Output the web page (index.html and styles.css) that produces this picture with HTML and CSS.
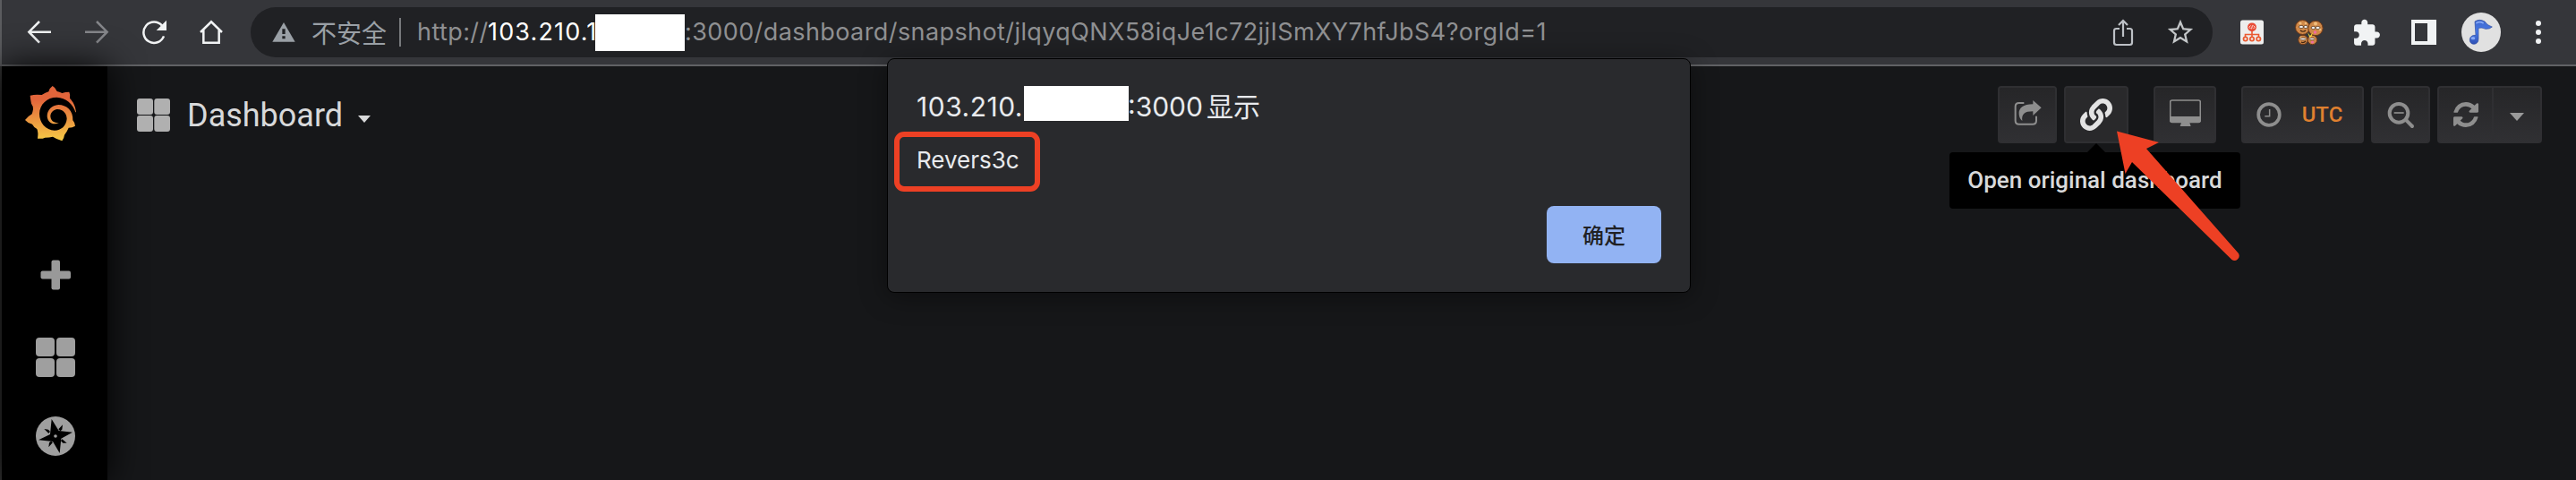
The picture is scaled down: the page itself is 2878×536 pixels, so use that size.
FILE: index.html
```html
<!DOCTYPE html>
<html lang="zh-CN">
<head>
<meta charset="utf-8">
<title>Dashboard</title>
<link rel="stylesheet" href="styles.css">
</head>
<body>
<header class="browser-bar">
  <nav class="nav-buttons">
    <span class="slot"><svg width="28" height="28" viewBox="90 65 84 84" class="line light"><path d="M171 106H97M132 71L97 106L132 142"/></svg></span>
    <span class="slot"><svg width="28" height="28" viewBox="282 65 84 84" class="line dim"><path d="M285 106H359M324 71L359 106L324 142"/></svg></span>
    <span class="slot"><svg width="28" height="28" viewBox="474 66 84 84"><path class="line light" d="M549 121A35 35 0 1 1 543 86"/><path fill="#f1f3f4" d="M558 68V102H524Z"/></svg></span>
    <span class="slot"><svg width="28" height="28" viewBox="666 66 84 84" class="line light"><path d="M672 108L708 73L744 108M682 100V143H734V100"/></svg></span>
  </nav>
  <div class="address">
    <svg class="warning" width="26" height="24" viewBox="911 73 78 72"><path fill="#9aa0a6" d="M950 76L988 141H912Z"/><path fill="#202124" d="M945 98H955V115H945ZM945 122H955V131H945Z"/></svg>
    <span class="insecure">不安全</span>
    <span class="divider"></span>
    <span class="url"><span class="scheme">http://</span><span class="host">103.210.1</span><span class="url-mask"></span><span class="path">:3000/dashboard/snapshot/jlqyqQNX58iqJe1c72jjISmXY7hfJbS4?orgId=1</span></span>
    <span class="slot"><svg width="24" height="32" viewBox="0 0 24 32" fill="none" stroke="#bdc1c6" stroke-width="2.2"><path d="M8 12H4.500Q2 12 2 14.500V27.500Q2 30 4.500 30H19.500Q22 30 22 27.500V14.500Q22 12 19.500 12H16M12 21V3.500M7 8L12 3L17 8"/></svg></span>
    <span class="slot"><svg width="34" height="34" viewBox="0 0 24 24"><path fill="#c4c7c9" d="M22 9.240l-7.190-.62L12 2 9.190 8.630 2 9.240l5.460 4.730L5.820 21 12 17.270 18.180 21l-1.630-7.030L22 9.240zM12 15.400l-3.760 2.270 1-4.280-3.320-2.880 4.380-.38L12 6.100l1.710 4.040 4.380.38-3.320 2.880 1 4.280L12 15.400z"/></svg></span>
  </div>
  <div class="extensions">
    <span class="slot">
      <svg width="26" height="28" viewBox="0 0 26 28"><rect width="26" height="27" y=".5" rx="2.500" fill="#eeeeed"/><path d="M13 11V19M5.500 19V16.500H20.500V19" fill="none" stroke="#ea5a31" stroke-width="1.600"/><circle cx="13" cy="8.300" r="4.900" fill="#e94b35"/><path d="M11.500 6.500L9.800 8.300L11.500 10.100M14.500 6.500L16.200 8.300L14.500 10.100M13.500 6.300L12.500 10.300" fill="none" stroke="#fff" stroke-width=".8"/><g fill="#f2eae5" stroke="#ea5a31" stroke-width="1.700"><circle cx="5.700" cy="21.500" r="2.200"/><circle cx="13" cy="21.500" r="2.200"/><circle cx="20.300" cy="21.500" r="2.200"/></g></svg>
    </span>
    <span class="slot">
      <svg width="34" height="30" viewBox="0 0 34 30"><g fill="#cf8848" stroke="#6b3718" stroke-width="1"><circle cx="9.500" cy="9.500" r="8"/><circle cx="24" cy="10.500" r="8.200"/><circle cx="10" cy="23.500" r="5.200"/><circle cx="20.500" cy="23.500" r="5.200"/></g><g fill="#f0bd7d"><circle cx="7" cy="5" r="1.600"/><circle cx="13" cy="5" r="1.300"/><circle cx="24" cy="5.500" r="2"/><circle cx="29" cy="12" r="1.400"/><circle cx="7.500" cy="20.500" r="1.100"/><circle cx="18" cy="20.500" r="1"/></g><g fill="#fff" stroke="#412411" stroke-width=".7"><ellipse cx="8" cy="9" rx="2.600" ry="1.500"/><ellipse cx="13" cy="9" rx="2.200" ry="1.500"/><ellipse cx="21.500" cy="10" rx="2.400" ry="1.500"/><ellipse cx="26.500" cy="10" rx="2.600" ry="1.500"/><ellipse cx="10" cy="22.500" rx="3.300" ry="1.300"/><ellipse cx="20" cy="22.500" rx="3" ry="1.200"/></g><path d="M7 13Q10 15.500 13 13M8 26Q10.500 27.500 13 25" fill="none" stroke="#412411" stroke-width="1.200"/><path d="M15 15L18 19L21 15L19.500 20H17Z" fill="#f4d936"/><circle cx="23.500" cy="15" r="1.700" fill="#f06ba0"/><circle cx="20.500" cy="26" r="1.600" fill="#f06ba0"/></svg>
    </span>
    <span class="slot"><svg width="33" height="33" viewBox="0.500 -.300 24 24"><path fill="#f1f3f4" d="M20.500 11H19V7c0-1.100-.9-2-2-2h-4V3.500C13 2.120 11.880 1 10.500 1S8 2.120 8 3.500V5H4c-1.100 0-1.990.9-1.990 2v3.800H3.500c1.490 0 2.700 1.210 2.700 2.700s-1.210 2.700-2.700 2.700H2V20c0 1.100.9 2 2 2h3.800v-1.500c0-1.490 1.210-2.700 2.700-2.700 1.490 0 2.700 1.210 2.700 2.700V22H17c1.100 0 2-.9 2-2v-4h1.500c1.380 0 2.500-1.120 2.500-2.500S21.880 11 20.500 11z"/></svg></span>
    <span class="slot"><svg width="28" height="28" viewBox="0 0 28 28"><path fill="#f1f3f4" fill-rule="evenodd" d="M0 0H28V28H0ZM4 4V24H18V4Z"/></svg></span>
    <span class="slot"><span class="avatar"><svg width="28" height="32" viewBox="0 0 84 96"><defs><linearGradient id="note" x1="0" y1="0" x2="0" y2="1"><stop offset="0" stop-color="#3d66cc"/><stop offset=".5" stop-color="#4a7be8"/><stop offset="1" stop-color="#2f50b4"/></linearGradient></defs><path fill="url(#note)" stroke="#2a489f" stroke-width="2" d="M21 12Q36 2 54 12Q63 26 79 30Q71 38 57 37Q44 31 33 34V69Q33 87 18 88Q3 87 4 71Q7 57 24 58Z"/><path d="M25 18Q37 10 50 18" stroke="#86a8f5" stroke-width="5" fill="none"/><ellipse cx="15" cy="68" rx="7" ry="5" fill="#88aaf5"/></svg></span></span>
    <span class="slot"><svg width="8" height="28" viewBox="0 0 8 28" fill="#f1f3f4"><circle cx="4" cy="4" r="3"/><circle cx="4" cy="14" r="3"/><circle cx="4" cy="24" r="3"/></svg></span>
  </div>
</header>

<div class="app">
  <aside class="sidebar">
    <svg class="logo" width="60" height="64" viewBox="80 76 180 192"><defs><linearGradient id="sun" x1="0" y1="0" x2="0" y2="1"><stop offset=".25" stop-color="#e2653b"/><stop offset="1" stop-color="#f6cb46"/></linearGradient></defs><path fill="url(#sun)" d="M254 167C252 146 244 132 233 120Q235 108 231 99Q218 99 207 103Q198 98 190 97Q185 84 175 79Q165 86 162 98Q151 102 139 109Q118 106 100 111Q101 125 104 138Q111 147 110 157Q108 168 106 173Q92 181 83 193Q92 204 107 207Q112 217 123 223Q128 235 125 255Q140 257 150 252Q164 252 176 249Q190 258 207 263Q214 254 215 243Q223 233 229 219Q242 219 251 213Q251 203 243 194C245 161 221 142 195 142C172 143 157 161 157 180C158 200 177 213 198 202C183 205 168 197 168 179C170 164 183 157 192 157C212 158 223 173 223 189C221 213 204 227 182 228C152 227 131 202 131 172C132 140 157 117 189 117C220 118 244 139 252 167Z"/></svg>
    <svg class="plus" width="34" height="34" viewBox="0 0 34 34" fill="#999"><rect x="12.500" y=".5" width="9.500" height="33" rx="2"/><rect x=".5" y="12.500" width="33.500" height="9" rx="2"/></svg>
    <svg class="apps" width="44" height="44" viewBox="0 0 44 44" fill="#9f9f9f"><rect width="21" height="21" rx="4"/><rect x="23" width="21" height="21" rx="4"/><rect y="23" width="21" height="21" rx="4"/><rect x="23" y="23" width="21" height="21" rx="4"/></svg>
    <svg class="compass" width="44" height="44" viewBox="120 615 132 132"><circle cx="186" cy="681" r="66" fill="#9f9f9f"/><path d="M173 624L197 663L243 668L205 689L200 738L177 699L129 694L168 675ZM210 643L208 659L202 664L196 658ZM148 657L162 659L168 666L163 672ZM224 704L211 704L204 697L208 691ZM163 718L165 703L171 698L177 702Z"/><circle cx="186" cy="681" r="5.500" fill="#9f9f9f"/></svg>
  </aside>
  <main class="content">
    <div class="page-toolbar">
      <svg class="title-icon" width="37" height="37" viewBox="0 0 37 37" fill="#b0b0b0"><rect width="18" height="18" rx="3"/><rect x="19.300" width="17.700" height="18" rx="3"/><rect y="19" width="18" height="18" rx="3"/><rect x="19.300" y="19" width="17.700" height="18" rx="3"/></svg>
      <span class="title">Dashboard</span>
      <svg class="title-caret" width="14" height="8" viewBox="0 0 14 8"><path fill="#d8d9da" d="M0 0H14L7 8Z"/></svg>
      <div class="actions">
        <span class="btn share"><svg width="31" height="30" viewBox="269 91 93 90"><path fill="none" stroke="#8e8e8e" stroke-width="6" d="M303 103H286Q274 103 274 115V162Q274 174 286 174H332Q344 174 344 162V147"/><path fill="#8e8e8e" d="M361 119L333 94V107C300 107 285 120 286 140Q287 155 297 163C294 140 305 131 333 131V145Z"/></svg></span>
        <span class="btn link"><svg width="36" height="36" viewBox="0 0 512 512"><path fill="#e3e3e3" d="M326.612 185.391c59.747 59.809 58.927 155.698.36 214.590-.11.12-.24.25-.36.37l-67.200 67.200c-59.270 59.270-155.699 59.262-214.960 0-59.270-59.260-59.270-155.700 0-214.960l37.106-37.106c9.840-9.840 26.786-3.300 27.294 10.606.648 17.722 3.826 35.527 9.690 52.721 1.986 5.822.567 12.262-3.783 16.612l-13.087 13.087c-28.026 28.026-28.905 73.660-1.155 101.960 28.024 28.579 74.086 28.749 102.325.51l67.200-67.190c28.191-28.191 28.073-73.757 0-101.830-3.701-3.694-7.429-6.564-10.341-8.569a16.037 16.037 0 0 1-6.947-12.606c-.396-10.567 3.348-21.456 11.698-29.806l21.054-21.055c5.521-5.521 14.182-6.199 20.584-1.731a152.482 152.482 0 0 1 20.522 17.197zM467.547 44.449c-59.261-59.262-155.690-59.270-214.960 0l-67.200 67.200c-.12.12-.25.25-.36.37-58.566 58.892-59.387 154.781.36 214.590a152.454 152.454 0 0 0 20.521 17.196c6.402 4.468 15.064 3.789 20.584-1.731l21.054-21.055c8.350-8.350 12.094-19.239 11.698-29.806a16.037 16.037 0 0 0-6.947-12.606c-2.912-2.005-6.640-4.875-10.341-8.569-28.073-28.073-28.191-73.639 0-101.830l67.200-67.190c28.239-28.239 74.300-28.069 102.325.51 27.750 28.300 26.872 73.934-1.155 101.960l-13.087 13.087c-4.350 4.350-5.769 10.790-3.783 16.612 5.864 17.194 9.042 34.999 9.690 52.721.509 13.906 17.454 20.446 27.294 10.606l37.106-37.106c59.271-59.259 59.271-155.699.001-214.959z"/></svg><span class="tooltip">Open original dashboard</span></span>
        <span class="btn monitor"><svg width="35" height="30" viewBox="789 93 105 90"><rect x="791" y="96" width="101" height="73" rx="6" fill="none" stroke="#8e8e8e" stroke-width="5"/><path fill="#8e8e8e" d="M790 150H893V163Q893 171 885 171H856L860 183H824L828 171H798Q790 171 790 163Z"/></svg></span>
        <span class="btn time"><svg width="28" height="28" viewBox="94 100 84 84" fill="none" stroke="#8e8e8e"><circle cx="136" cy="142" r="35.500" stroke-width="11"/><path stroke-width="4.500" d="M138 124V147H122"/></svg><span>UTC</span></span>
        <span class="btn zoom"><svg width="31" height="31" viewBox="529 100 93 93" fill="none" stroke="#8e8e8e" stroke-width="12"><circle cx="568" cy="140" r="31"/><path d="M594 165L613 184" stroke-linecap="round"/><path stroke-width="5" d="M552 139H585"/></svg></span>
        <span class="group"><span class="refresh"><svg width="28" height="28" viewBox="0 0 1536 1536"><path fill="#8e8e8e" d="M1511 928q0 5-1 7-64 268-268 434.500t-478 166.500q-146 0-282.500-55t-243.500-157l-129 129q-19 19-45 19t-45-19-19-45v-448q0-26 19-45t45-19h448q26 0 45 19t19 45-19 45l-137 137q71 66 161 102t187 36q134 0 250-65t186-179q11-17 53-117 8-23 30-23h192q13 0 22.500 9.500t9.500 22.500zm25-800v448q0 26-19 45t-45 19h-448q-26 0-45-19t-19-45 19-45l138-138q-148-137-349-137-134 0-250 65t-186 179q-11 17-53 117-8 23-30 23h-199q-13 0-22.500-9.500t-9.500-22.500v-7q65-268 270-434.500t480-166.500q146 0 284 55.500t245 156.500l130-129q19-19 45-19t45 19 19 45z"/></svg></span><span class="interval"><svg width="16" height="9" viewBox="0 0 16 9"><path fill="#9a9a9a" d="M0 0H16L8 9Z"/></svg></span></span>
      </div>
    </div>
  </main>
</div>

<section class="dialog">
  <div class="dialog-title"><span class="origin">103.210.</span><span class="title-mask"></span><span class="port">:3000</span><span class="says">显示</span></div>
  <div class="message"><span>Revers3c</span></div>
  <div class="dialog-actions"><button class="ok">确定</button></div>
</section>

<svg class="pointer" width="150" height="156" viewBox="2360 140 150 156"><path fill="#ed4024" d="M2365 146.500L2412 159L2398 166L2501 283A5.300 5.300 0 0 1 2493.500 290L2382 181L2374.500 194Z"/></svg>
</body>
</html>
```
FILE: styles.css
```css
* { box-sizing: border-box; }
body {
  margin: 0;
  width: 2878px;
  height: 536px;
  overflow: hidden;
  background: #161719;
  font-family: Inter, "Noto Sans CJK SC", sans-serif;
}
svg { display: block; flex: none; }
.line { fill: none; stroke-width: 7.5; }
.light { stroke: #f1f3f4; }
.dim { stroke: #85868a; }

.browser-bar {
  display: flex;
  align-items: center;
  height: 74px;
  padding: 0 10px 2px 10px;
  background: #35363a;
  border-left: 2px solid #5b5c5f;
  box-shadow: inset 0 -2px #616265;
}
.nav-buttons, .extensions { display: flex; }
.slot {
  display: flex;
  flex: none;
  align-items: center;
  justify-content: center;
  width: 64px;
  height: 56px;
}
.address {
  display: flex;
  align-items: center;
  width: 2192px;
  height: 56px;
  margin: 0 12px;
  padding: 0 4px 0 24px;
  border-radius: 28px;
  background: #202124;
}
.insecure {
  width: 84px;
  margin-left: 18px;
  color: #9aa0a6;
  font: 28px/40px "Noto Sans CJK SC", sans-serif;
}
.divider { width: 2px; height: 32px; margin: 0 18px 0 14px; background: #77797c; }
.url {
  display: flex;
  flex: 1;
  align-items: center;
  height: 41px;
  color: #8f9092;
  font-size: 27px;
  line-height: 42px;
  letter-spacing: .41px;
  white-space: nowrap;
}
.scheme { width: 79px; }
.host { width: 120px; overflow: hidden; color: #fff; letter-spacing: 1.15px; }
.url-mask { width: 100px; height: 41px; background: #fff; }
.avatar {
  display: flex;
  align-items: center;
  justify-content: center;
  width: 44px;
  height: 44px;
  border-radius: 50%;
  background: #e1e1e1;
}

.app { display: flex; height: 462px; border-left: 2px solid #333; }
.sidebar {
  display: flex;
  flex-direction: column;
  align-items: center;
  width: 118px;
  padding-top: 21px;
  background: #000;
  box-shadow: 0 0 40px #000;
}
.logo { margin-right: 9px; }
.plus { margin-top: 131px; }
.apps { margin-top: 53px; }
.compass { margin-top: 44px; }
.sidebar svg:not(.logo) { margin-left: 2px; }

.content { flex: 1; padding: 22px 38px 0 33px; }
.page-toolbar { display: flex; align-items: center; height: 64px; }
.title {
  margin-left: 19px;
  width: 176px;
  padding-top: 2px;
  color: #d8d9da;
  font: 36px/48px Roboto, sans-serif;
}
.title-caret { margin: 10px 0 0 15px; }
.actions {
  display: flex;
  gap: 8px;
  margin-left: auto;
}
.btn, .group {
  position: relative;
  display: flex;
  align-items: center;
  justify-content: center;
  height: 64px;
  border: 2px solid #2f2f32;
  border-radius: 4px;
  background: linear-gradient(#262628, #303033);
}
.share { width: 66px; }
.share svg { margin: -4px 0 0 1px; }
.link { width: 72px; background: #29292b; }
.monitor { width: 70px; margin: 0 20px; }
.monitor svg { margin-top: -4px; }
.time {
  width: 137px;
  gap: 23px;
  padding-right: 7px;
  color: #e0802f;
  font: 500 24px/32px Roboto, sans-serif;
}
.zoom { width: 66px; }
.group { width: 117px; }
.refresh, .interval { display: flex; align-items: center; justify-content: center; height: 60px; }
.refresh { width: 61px; border-right: 2px solid #2f2f32; }
.interval { flex: 1; padding-top: 4px; }
.tooltip {
  position: absolute;
  top: 72px;
  left: -130px;
  width: 325px;
  height: 63px;
  border-radius: 4px;
  background: #000;
  color: #d8d9da;
  font: 500 26px/62px Roboto, sans-serif;
  text-align: center;
  white-space: nowrap;
}
.tooltip::before {
  content: "";
  position: absolute;
  top: -10px;
  left: 154px;
  border: 10px solid transparent;
  border-top: 0;
  border-bottom-color: #000;
}

.dialog {
  position: absolute;
  top: 65px;
  left: 991px;
  width: 898px;
  height: 262px;
  padding: 30px 32px 0 7px;
  border: 1px solid #000;
  border-radius: 8px;
  background: #292a2d;
  box-shadow: 0 4px 30px rgba(0, 0, 0, .4);
  color: #e8eaed;
}
.dialog-title {
  display: flex;
  align-items: center;
  height: 39px;
  padding-left: 25px;
  font-size: 30px;
  line-height: 46px;
  white-space: nowrap;
}
.origin, .port, .says { padding-top: 6px; }
.origin { width: 120px; letter-spacing: .5px; }
.title-mask { width: 117px; height: 39px; background: #fff; }
.port { width: 88px; margin-left: -1px; }
.message {
  width: 163px;
  height: 67px;
  margin-top: 12px;
  padding-left: 19px;
  border: 6px solid #ed4024;
  border-radius: 11px;
  font-size: 26px;
  line-height: 52px;
}
.dialog-actions { display: flex; justify-content: flex-end; margin-top: 16px; }
.ok {
  width: 128px;
  height: 64px;
  border: 0;
  border-radius: 8px;
  background: #92b3f3;
  color: #202124;
  font: 500 24px/32px "Noto Sans CJK SC", sans-serif;
}
.pointer { position: absolute; top: 140px; left: 2360px; }
```
